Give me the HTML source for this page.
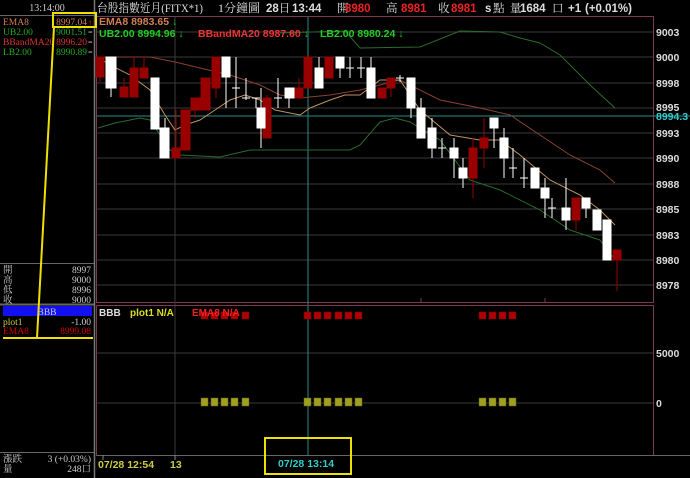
<!DOCTYPE html>
<html><head><meta charset="utf-8"><style>
html,body{margin:0;padding:0;background:#000;width:690px;height:478px;overflow:hidden}
svg{display:block}
.s{font-family:"Liberation Serif","Noto Serif CJK TC",serif}
.b{font-family:"Liberation Sans","Noto Sans CJK TC",sans-serif;font-weight:bold}
</style></head><body>
<svg width="690" height="478" viewBox="0 0 690 478" xmlns="http://www.w3.org/2000/svg">
<rect width="690" height="478" fill="#000"/>
<!-- left panel -->
<line x1="94.5" y1="0" x2="94.5" y2="478" stroke="#777" stroke-width="1.5"/>
<line x1="0" y1="15.5" x2="94" y2="15.5" stroke="#666"/>
<text x="47" y="11" class="s" font-size="10" fill="#ccc" text-anchor="middle">13:14:00</text>
<g class="s" font-size="9.5">
<text x="3" y="25" fill="#d08050">EMA8</text><text x="87" y="25" fill="#d08050" text-anchor="end">8997.04</text><text x="88" y="25" fill="#f22" font-size="8">↑</text>
<text x="3" y="35" fill="#2a2">UB2.00</text><text x="87" y="35" fill="#2a2" text-anchor="end">9001.51</text><text x="88" y="35" fill="#ccc" font-size="8">=</text>
<text x="3" y="45" fill="#d33">BBandMA20</text><text x="87" y="45" fill="#d33" text-anchor="end">8996.20</text><text x="88" y="45" fill="#ccc" font-size="8">=</text>
<text x="3" y="55" fill="#2a2">LB2.00</text><text x="87" y="55" fill="#2a2" text-anchor="end">8990.89</text><text x="88" y="55" fill="#ccc" font-size="8">=</text>
</g>
<line x1="0" y1="263.5" x2="94" y2="263.5" stroke="#666"/>
<g class="s" font-size="9.5" fill="#ccc">
<text x="3" y="273">開</text><text x="91" y="273" text-anchor="end">8997</text>
<text x="3" y="283">高</text><text x="91" y="283" text-anchor="end">9000</text>
<text x="3" y="293">低</text><text x="91" y="293" text-anchor="end">8996</text>
<text x="3" y="303">收</text><text x="91" y="303" text-anchor="end">9000</text>
</g>
<line x1="0" y1="304.5" x2="94" y2="304.5" stroke="#666" stroke-width="2"/>
<rect x="3" y="306" width="89" height="10" fill="#1010f0"/>
<text x="47" y="315" class="s" font-size="9.5" fill="#ccc" text-anchor="middle">BBB</text>
<g class="s" font-size="9.5">
<text x="3" y="325" fill="#cc4">plot1</text><text x="91" y="325" fill="#ccc" text-anchor="end">-1.00</text>
<text x="3" y="334" fill="#c00">EMA8</text><text x="91" y="334" fill="#c00" text-anchor="end">8999.08</text>
</g>
<line x1="0" y1="452.5" x2="94" y2="452.5" stroke="#666"/>
<g class="s" font-size="9.5" fill="#ccc">
<text x="3" y="462">漲跌</text><text x="91" y="462" text-anchor="end">3 (+0.03%)</text>
<text x="3" y="472">量</text><text x="91" y="472" text-anchor="end">248口</text>
</g>
<!-- title -->
<text x="97" y="12" class="s" font-size="12" fill="#ddd" textLength="106" lengthAdjust="spacingAndGlyphs">台股指數近月(FITX*1)</text>
<text x="218" y="12" class="s" font-size="12" fill="#ddd">1分鐘圖</text>
<g class="b" font-size="11.5" fill="#ddd">
<text x="266" y="12">28<tspan class="s" font-weight="normal">日</tspan></text>
<text x="292" y="12">13:44</text>
<text x="337" y="12" class="s" font-weight="normal">開</text>
<text x="345" y="12" fill="#e22">8980</text>
<text x="386" y="12" class="s" font-weight="normal">高</text>
<text x="401" y="12" fill="#e22">8981</text>
<text x="438" y="12" class="s" font-weight="normal">收</text>
<text x="451" y="12" fill="#e22">8981</text>
<text x="485" y="12">s</text>
<text x="493" y="12" class="s" font-weight="normal">點</text>
<text x="510" y="12" class="s" font-weight="normal">量</text>
<text x="520" y="12">1684</text>
<text x="552" y="12" class="s" font-weight="normal">口</text>
<text x="568" y="12">+1</text>
<text x="585" y="12">(+0.01%)</text>
</g>
<!-- main chart frame -->
<rect x="96.5" y="16.5" width="557" height="286" fill="none" stroke="#7a3a50"/>
<g stroke="#3a3a3a" stroke-width="1">
<line x1="97" y1="32" x2="653" y2="32"/><line x1="97" y1="57" x2="653" y2="57"/><line x1="97" y1="83" x2="653" y2="83"/><line x1="97" y1="108" x2="653" y2="108"/><line x1="97" y1="133" x2="653" y2="133"/><line x1="97" y1="158" x2="653" y2="158"/><line x1="97" y1="184" x2="653" y2="184"/><line x1="97" y1="209" x2="653" y2="209"/><line x1="97" y1="235" x2="653" y2="235"/><line x1="97" y1="260" x2="653" y2="260"/><line x1="97" y1="285" x2="653" y2="285"/>
<line x1="175" y1="17" x2="175" y2="455"/>
</g>
<line x1="97" y1="116" x2="690" y2="116" stroke="#2a8a8a"/>
<line x1="308" y1="17" x2="308" y2="455" stroke="#2a8a8a"/>
<g class="b" font-size="10.5" fill="#ddd">
<text x="656" y="36">9003</text><text x="656" y="61">9000</text><text x="656" y="87">8998</text><text x="656" y="111">8995</text><text x="656" y="137">8993</text><text x="656" y="162">8990</text><text x="656" y="188">8988</text><text x="656" y="213">8985</text><text x="656" y="239">8983</text><text x="656" y="264">8980</text><text x="656" y="289">8978</text>
<text x="656" y="120" fill="#3cc">8994.3</text>
</g>
<!-- indicator lines -->
<g fill="none" stroke-width="1">
<polyline stroke="#2a6a30" points="280,33 345,31 360,48 420,47 460,31 500,32 520,38 540,43 560,55 590,85 615,108"/>
<polyline stroke="#2a6a30" points="98,128 115,123 140,118 150,120 160,135 170,150 180,155 220,157 250,150 300,150 350,150 360,145 380,122 395,118 410,122 440,140 470,180 500,190 540,210 570,230 600,240 615,260"/>
<polyline stroke="#8a4030" points="98,57 150,57 175,62 200,68 230,75 260,85 280,95 300,98 330,95 360,90 380,85 400,80 440,100 480,108 510,115 540,135 570,155 600,170 615,183"/>
<polyline stroke="#c09060" points="98,57 110,65 130,75 150,90 165,115 175,130 185,125 200,120 215,110 230,100 245,95 260,100 275,110 300,115 310,108 330,100 345,95 360,95 380,80 400,80 420,110 450,135 480,140 500,140 520,155 550,180 580,195 600,210 615,225"/>
</g>
<!-- legend -->
<g class="b" font-size="10.5">
<text x="99" y="25" fill="#d08050">EMA8 8983.65 <tspan fill="#2c2">↓</tspan></text>
<text x="99" y="37" fill="#2c2">UB2.00 8994.96 ↓</text>
<text x="198" y="37" fill="#e33">BBandMA20 8987.60 <tspan fill="#2c2">↓</tspan></text>
<text x="320" y="37" fill="#2c2">LB2.00 8980.24 ↓</text>
</g>
<!-- candles -->
<g stroke-width="1">
<g stroke="#900" fill="#900">
<line x1="100" y1="57" x2="100" y2="82"/><rect x="96" y="57" width="8" height="20"/>
<line x1="124" y1="78" x2="124" y2="97"/><rect x="120" y="87" width="8" height="10"/>
<line x1="134" y1="57" x2="134" y2="97"/><rect x="130" y="68" width="8" height="29"/>
<line x1="144" y1="57" x2="144" y2="78"/><rect x="140" y="68" width="8" height="10"/>
<line x1="176" y1="110" x2="176" y2="158"/><rect x="172" y="148" width="8" height="10"/>
<rect x="181" y="110" width="9" height="40"/>
<line x1="195" y1="98" x2="195" y2="118"/><rect x="191" y="98" width="9" height="12"/>
<rect x="201" y="78" width="9" height="32"/>
<line x1="216" y1="57" x2="216" y2="98"/><rect x="212" y="57" width="8" height="31"/>
<line x1="267" y1="95" x2="267" y2="138"/><rect x="263" y="98" width="8" height="40"/>
<line x1="299" y1="78" x2="299" y2="98"/><rect x="295" y="88" width="8" height="10"/>
<rect x="304" y="57" width="8" height="31"/>
<rect x="325" y="57" width="8" height="21"/>
<rect x="378" y="88" width="8" height="10"/>
<line x1="391" y1="78" x2="391" y2="97"/><rect x="387" y="78" width="8" height="10"/>
<line x1="473" y1="138" x2="473" y2="198"/><rect x="469" y="148" width="8" height="30"/>
<line x1="484" y1="118" x2="484" y2="168"/><rect x="480" y="138" width="8" height="10"/>
<line x1="576" y1="198" x2="576" y2="230"/><rect x="572" y="198" width="8" height="22"/>
<line x1="617" y1="250" x2="617" y2="291"/><rect x="613" y="250" width="8" height="10"/>
</g>
<g stroke="#fff" fill="#fff">
<line x1="111" y1="57" x2="111" y2="97"/><rect x="106" y="57" width="10" height="31"/>
<rect x="151" y="78" width="8" height="51"/>
<line x1="165" y1="118" x2="165" y2="158"/><rect x="160" y="128" width="9" height="30"/>
<line x1="226" y1="57" x2="226" y2="108"/><rect x="222" y="57" width="8" height="20"/>
<line x1="236" y1="57" x2="236" y2="108"/><line x1="232" y1="88" x2="240" y2="88"/>
<line x1="246" y1="78" x2="246" y2="100"/><line x1="242" y1="98" x2="250" y2="98"/>
<line x1="256" y1="98" x2="256" y2="108"/><line x1="252" y1="98" x2="260" y2="98"/>
<line x1="261" y1="88" x2="261" y2="148"/><rect x="257" y="108" width="8" height="20"/>
<line x1="278" y1="78" x2="278" y2="108"/><line x1="274" y1="98" x2="282" y2="98"/>
<line x1="289" y1="88" x2="289" y2="108"/><rect x="285" y="88" width="9" height="10"/>
<line x1="319" y1="57" x2="319" y2="88"/><rect x="315" y="68" width="8" height="20"/>
<line x1="340" y1="57" x2="340" y2="78"/><rect x="336" y="57" width="8" height="11"/>
<line x1="350" y1="57" x2="350" y2="78"/><line x1="346" y1="68" x2="354" y2="68"/>
<line x1="361" y1="57" x2="361" y2="78"/><line x1="357" y1="68" x2="365" y2="68"/>
<line x1="371" y1="57" x2="371" y2="98"/><rect x="367" y="68" width="8" height="30"/>
<line x1="400" y1="75" x2="400" y2="82"/><line x1="396" y1="78" x2="404" y2="78"/>
<line x1="411" y1="78" x2="411" y2="118"/><rect x="407" y="78" width="8" height="30"/>
<line x1="421" y1="98" x2="421" y2="138"/><rect x="417" y="108" width="8" height="30"/>
<line x1="432" y1="118" x2="432" y2="158"/><rect x="428" y="128" width="8" height="20"/>
<line x1="442" y1="138" x2="442" y2="158"/><line x1="438" y1="148" x2="446" y2="148"/>
<line x1="454" y1="138" x2="454" y2="178"/><rect x="450" y="148" width="8" height="10"/>
<line x1="463" y1="158" x2="463" y2="188"/><rect x="459" y="168" width="8" height="10"/>
<line x1="494" y1="118" x2="494" y2="148"/><rect x="490" y="118" width="8" height="10"/>
<line x1="504" y1="128" x2="504" y2="178"/><rect x="500" y="138" width="8" height="20"/>
<line x1="513" y1="148" x2="513" y2="178"/><line x1="509" y1="168" x2="517" y2="168"/>
<line x1="524" y1="158" x2="524" y2="188"/><line x1="520" y1="178" x2="528" y2="178"/>
<rect x="531" y="168" width="8" height="20"/>
<line x1="545" y1="178" x2="545" y2="218"/><rect x="541" y="188" width="8" height="10"/>
<line x1="552" y1="198" x2="552" y2="218"/><line x1="548" y1="208" x2="556" y2="208"/>
<line x1="566" y1="178" x2="566" y2="230"/><rect x="562" y="208" width="8" height="12"/>
<line x1="586" y1="198" x2="586" y2="218"/><rect x="582" y="198" width="8" height="10"/>
<rect x="593" y="210" width="8" height="20"/>
<rect x="603" y="220" width="8" height="40"/>
</g>
</g>
<line x1="421" y1="298" x2="421" y2="302" stroke="#7a3a50"/><line x1="545" y1="298" x2="545" y2="302" stroke="#7a3a50"/>
<!-- lower panel -->
<rect x="96.5" y="305.5" width="557" height="150" fill="none" stroke="#7a3a50"/>
<line x1="97" y1="353" x2="653" y2="353" stroke="#3a3a3a"/>
<line x1="97" y1="403" x2="653" y2="403" stroke="#3a3a3a"/>
<line x1="175" y1="306" x2="175" y2="455" stroke="#3a3a3a"/>
<line x1="308" y1="306" x2="308" y2="455" stroke="#2a8a8a"/>
<g class="b" font-size="10.5" fill="#ddd"><text x="656" y="357">5000</text><text x="656" y="407">0</text></g>
<g fill="#b00000" stroke="#700" stroke-width="0.5">
<rect x="201" y="312" width="7" height="7"/><rect x="211" y="312" width="7" height="7"/><rect x="221" y="312" width="7" height="7"/><rect x="231" y="312" width="7" height="7"/><rect x="242" y="312" width="7" height="7"/>
<rect x="304" y="312" width="7" height="7"/><rect x="314" y="312" width="7" height="7"/><rect x="324" y="312" width="7" height="7"/><rect x="335" y="312" width="7" height="7"/><rect x="345" y="312" width="7" height="7"/><rect x="355" y="312" width="7" height="7"/>
<rect x="479" y="312" width="7" height="7"/><rect x="489" y="312" width="7" height="7"/><rect x="499" y="312" width="7" height="7"/><rect x="509" y="312" width="7" height="7"/>
</g>
<g fill="#a0a020" stroke="#606010" stroke-width="0.5">
<rect x="201" y="398" width="7" height="8"/><rect x="211" y="398" width="7" height="8"/><rect x="221" y="398" width="7" height="8"/><rect x="231" y="398" width="7" height="8"/><rect x="242" y="398" width="7" height="8"/>
<rect x="304" y="398" width="7" height="8"/><rect x="314" y="398" width="7" height="8"/><rect x="324" y="398" width="7" height="8"/><rect x="335" y="398" width="7" height="8"/><rect x="345" y="398" width="7" height="8"/><rect x="355" y="398" width="7" height="8"/>
<rect x="479" y="398" width="7" height="8"/><rect x="489" y="398" width="7" height="8"/><rect x="499" y="398" width="7" height="8"/><rect x="509" y="398" width="7" height="8"/>
</g>
<g class="b" font-size="10"><text x="99" y="316" fill="#ddd">BBB</text><text x="130" y="316" fill="#dd2">plot1 N/A</text><text x="192" y="316" fill="#e22">EMA8 N/A</text></g>
<!-- time axis -->
<line x1="97" y1="455.5" x2="690" y2="455.5" stroke="#666"/>
<g stroke="#888"><line x1="103" y1="455" x2="103" y2="460"/><line x1="175" y1="455" x2="175" y2="460"/></g>
<g class="b" font-size="10.5"><text x="98" y="468" fill="#cc4">07/28 12:54</text><text x="170" y="468" fill="#cc4">13</text><text x="278" y="467" fill="#3cc">07/28 13:14</text></g>
<!-- yellow annotations -->
<g fill="none" stroke="#f0e000" stroke-width="2">
<rect x="53" y="13" width="43" height="14"/>
<line x1="54" y1="27" x2="37" y2="338"/>
<line x1="3" y1="338" x2="93" y2="338"/>
<rect x="265" y="438" width="86" height="36"/>
</g>
</svg>
</body></html>
